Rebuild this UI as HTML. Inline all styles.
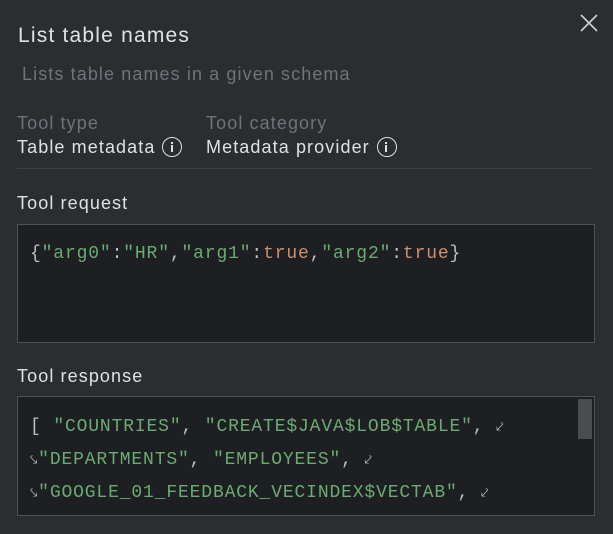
<html><head><style>
body{margin:0;width:613px;height:534px;background:#2b2d30;font-family:"Liberation Sans",sans-serif;color:#dfe1e5;position:relative;overflow:hidden}
.a{position:absolute;white-space:nowrap}
.t{font-size:18px;letter-spacing:1.1px}
.mono{font-family:"Liberation Mono",monospace;font-size:18px;letter-spacing:0.85px}
.g{color:#6aab73}.o{color:#cf8e6d}.w{color:#bcbec4}
.box{position:absolute;left:17px;width:576px;background:#1e1f22;border:1px solid #4e5157}
.ic{display:inline-block;width:20px;height:20px;border:1.5px solid #dfe1e5;border-radius:50%;box-sizing:border-box;vertical-align:-4px;margin-left:7px;position:relative}
.ic:before{content:"";position:absolute;left:7.5px;top:3.5px;width:2px;height:2px;background:#dfe1e5}
.ic:after{content:"";position:absolute;left:7.5px;top:7px;width:2px;height:7px;background:#dfe1e5}
</style></head><body>
<div class="a" style="left:18px;top:24px;font-size:21px;letter-spacing:1.2px">List table names</div>
<div class="a t" style="left:22px;top:64px;color:#6f737a">Lists table names in a given schema</div>
<svg class="a" style="left:579px;top:13px" width="20" height="20"><path d="M2 2L18 18M18 2L2 18" stroke="#ced0d6" stroke-width="1.6"/></svg>
<div class="a t" style="left:17px;top:113px;color:#6f737a">Tool type</div>
<div class="a t" style="left:206px;top:113px;color:#6f737a">Tool category</div>
<div class="a t" style="left:17px;top:137px">Table metadata<span class="ic"></span></div>
<div class="a t" style="left:206px;top:137px">Metadata provider<span class="ic"></span></div>
<div class="a" style="left:17px;top:168px;width:576px;height:1px;background:#3c3f44"></div>
<div class="a t" style="left:17px;top:193px">Tool request</div>
<div class="box" style="top:224px;height:117px"></div>
<div class="a mono w" style="left:30px;top:244px">{<span class="g">"arg0"</span>:<span class="g">"HR"</span>,<span class="g">"arg1"</span>:<span class="o">true</span>,<span class="g">"arg2"</span>:<span class="o">true</span>}</div>
<div class="a t" style="left:17px;top:366px">Tool response</div>
<div class="box" style="top:396px;height:118px"></div>
<div class="a" style="left:578px;top:399px;width:14px;height:40px;background:#4a4c50"></div>
<div class="a mono w" style="left:30px;top:411px;line-height:33px">[ <span class="g">"COUNTRIES"</span>, <span class="g">"CREATE$JAVA$LOB$TABLE"</span>, <span style="font-size:13px">⤦</span><br><span style="font-size:13px">⤥</span><span class="g">"DEPARTMENTS"</span>, <span class="g">"EMPLOYEES"</span>, <span style="font-size:13px">⤦</span><br><span style="font-size:13px">⤥</span><span class="g">"GOOGLE_01_FEEDBACK_VECINDEX$VECTAB"</span>, <span style="font-size:13px">⤦</span></div>
</body></html>
